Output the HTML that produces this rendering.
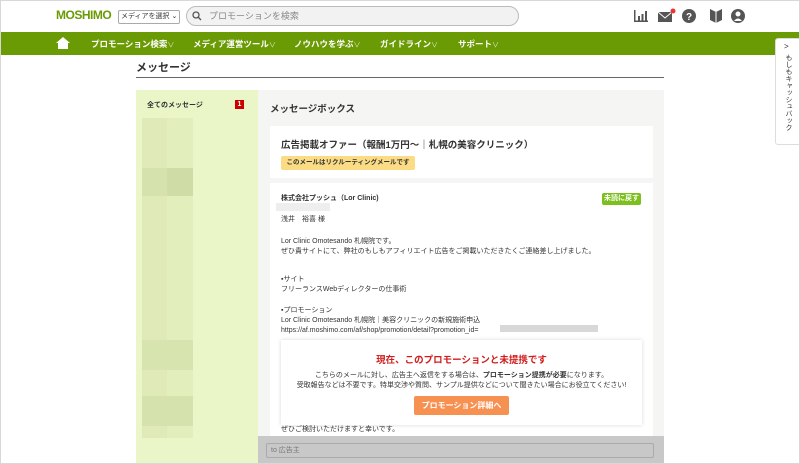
<!DOCTYPE html>
<html><head><meta charset="utf-8"><style>
*{margin:0;padding:0;box-sizing:border-box}
body{width:800px;height:464px;overflow:hidden;background:#fff;font-family:"Liberation Sans","Noto Sans CJK JP",sans-serif;color:#333;position:relative}
.abs{position:absolute;white-space:nowrap}
.logo{left:56px;top:8px;font-weight:bold;color:#6a9a04;font-size:12px;letter-spacing:-0.5px}
.sel{left:118px;top:10px;width:62px;height:14px;border:1px solid #aaa;font-size:7px;line-height:12px;padding-left:2px;border-radius:2px}
.search{left:186px;top:6px;width:333px;height:20px;border:1px solid #bbb;border-radius:10px;background:#f2f2f2;font-size:9px;color:#888;line-height:18px;padding-left:22px}
.nav{left:0;top:32px;width:800px;height:23px;background:#6a9a04;color:#fff;font-size:8.5px;font-weight:bold}
.nav span{position:absolute;top:6px}
.nav i{font-style:normal;font-weight:normal;font-size:7px;color:#dfe9c8}
.ttl{left:136px;top:59px;font-size:11px;font-weight:bold}
.line{left:136px;top:77px;width:528px;height:1px;background:#666}
.side{left:136px;top:90px;width:122px;height:374px;background:#eaf5c8}
.main{left:258px;top:90px;width:406px;height:374px;background:#f5f5f3}
.card{background:#fff}
.t{font-size:7px;line-height:10px}
</style></head><body>
<div class="abs logo">MOSHIMO</div>
<div class="abs sel">メディアを選択 ⌄</div>
<div class="abs search">プロモーションを検索</div>
<svg class="abs" style="left:192px;top:11px" width="10" height="10"><circle cx="4" cy="4" r="3" fill="none" stroke="#555" stroke-width="1.3"/><line x1="6" y1="6" x2="9" y2="9" stroke="#555" stroke-width="1.3"/></svg>
<svg class="abs" style="left:630px;top:6px" width="120" height="20">
<g fill="#555"><rect x="4" y="4" width="1.5" height="12"/><rect x="4" y="14.5" width="14" height="1.5"/><rect x="8" y="10" width="2" height="5"/><rect x="11.5" y="8" width="2" height="7"/><rect x="15" y="5" width="2" height="10"/>
<rect x="28" y="6" width="14" height="10"/><path d="M28 6 L35 12 L42 6" stroke="#fff" fill="none"/><circle cx="43" cy="5" r="2.5" fill="#e33"/>
<circle cx="59" cy="10" r="7"/><circle cx="108" cy="10" r="7"/>
<path d="M80 3 L86 6 L92 3 L92 14 L86 17 L80 14Z"/></g>
<text x="59" y="14" font-size="10" font-weight="bold" fill="#fff" text-anchor="middle">?</text>
<circle cx="108" cy="8" r="2.5" fill="#fff"/><path d="M104 15 Q108 10 112 15Z" fill="#fff"/><path d="M86 6 L86 17" stroke="#fff"/>
</svg>
<div class="abs nav">
<svg class="abs" style="left:56px;top:4px" width="14" height="14"><path d="M7 1 L14 7 L12 7 L12 13 L2 13 L2 7 L0 7Z" fill="#fff"/></svg>
<span style="left:91px">プロモーション検索<i>∨</i></span>
<span style="left:193px">メディア運営ツール<i>∨</i></span>
<span style="left:294px">ノウハウを学ぶ<i>∨</i></span>
<span style="left:380px">ガイドライン<i>∨</i></span>
<span style="left:458px">サポート<i>∨</i></span>
</div>
<div class="abs" style="left:775px;top:38px;width:26px;height:107px;background:#fff;border:1px solid #ddd;border-radius:3px"></div>
<div class="abs" style="left:784px;top:42px;font-size:8px">&gt;</div>
<div class="abs" style="left:783px;top:54px;font-size:7px;writing-mode:vertical-rl;line-height:10px">もしもキャッシュバック</div>
<div class="abs ttl">メッセージ</div>
<div class="abs line"></div>
<div class="abs side"></div>
<div class="abs" style="left:142px;top:118px;width:25px;height:320px;background:#dfeab8"></div>
<div class="abs" style="left:167px;top:118px;width:26px;height:320px;background:#e2eebc"></div>
<div class="abs" style="left:142px;top:168px;width:51px;height:28px;background:#d6e2ad"></div>
<div class="abs" style="left:167px;top:168px;width:26px;height:28px;background:#cfdca5"></div>
<div class="abs" style="left:142px;top:340px;width:51px;height:30px;background:#d8e4b0"></div>
<div class="abs" style="left:142px;top:396px;width:51px;height:30px;background:#d6e2ad"></div>
<div class="abs t" style="left:147px;top:101px;font-weight:bold">全てのメッセージ</div>
<div class="abs" style="left:235px;top:100px;width:9px;height:9px;background:#c00;color:#fff;font-size:7px;text-align:center;line-height:9px;font-weight:bold">1</div>
<div class="abs main"></div>
<div class="abs" style="left:270px;top:101px;font-size:9.5px;font-weight:bold">メッセージボックス</div>
<div class="abs card" style="left:270px;top:126px;width:383px;height:52px"></div>
<div class="abs" style="left:281px;top:137px;font-size:9.5px;font-weight:bold">広告掲載オファー（報酬1万円〜｜札幌の美容クリニック）</div>
<div class="abs" style="left:281px;top:156px;width:134px;height:14px;background:#fbdc84;border-radius:2px;font-size:6.5px;font-weight:bold;line-height:14px;text-align:center">このメールはリクルーティングメールです</div>
<div class="abs card" style="left:270px;top:183px;width:383px;height:253px"></div>
<div class="abs t" style="left:281px;top:194px;font-weight:bold">株式会社プッシュ（Lor Clinic)</div>
<div class="abs" style="left:276px;top:203px;width:54px;height:8px;background:#eee"></div>
<div class="abs" style="left:602px;top:193px;width:39px;height:12px;background:#7cbf1e;border-radius:2px;color:#fff;font-size:7px;font-weight:bold;text-align:center;line-height:12px">未読に戻す</div>
<div class="abs t" style="left:281px;top:215px">浅井　裕喜 様</div>
<div class="abs t" style="left:281px;top:237px">Lor Clinic Omotesando 札幌院です。<br>ぜひ貴サイトにて、弊社のもしもアフィリエイト広告をご掲載いただきたくご連絡差し上げました。</div>
<div class="abs t" style="left:281px;top:275px">▪サイト<br>フリーランスWebディレクターの仕事術</div>
<div class="abs t" style="left:281px;top:306px">▪プロモーション<br>Lor Clinic Omotesando 札幌院｜美容クリニックの新規施術申込<br>https://af.moshimo.com/af/shop/promotion/detail?promotion_id=</div>
<div class="abs" style="left:500px;top:325px;width:98px;height:7px;background:#d8d8d8"></div>
<div class="abs" style="left:281px;top:340px;width:361px;height:85px;background:#fff;box-shadow:0 0 4px rgba(0,0,0,.15)"></div>
<div class="abs" style="left:281px;top:352px;width:361px;text-align:center;color:#d21d1d;font-size:9.5px;font-weight:bold">現在、このプロモーションと未提携です</div>
<div class="abs t" style="left:281px;top:371px;width:361px;text-align:center">こちらのメールに対し、広告主へ返信をする場合は、<b>プロモーション提携が必要</b>になります。<br>受取報告などは不要です。特単交渉や質問、サンプル提供などについて聞きたい場合にお役立てください!</div>
<div class="abs" style="left:414px;top:396px;width:95px;height:19px;background:#f79152;border-radius:2px;color:#fff;font-size:8px;font-weight:bold;text-align:center;line-height:19px">プロモーション詳細へ</div>
<div class="abs t" style="left:281px;top:425px">ぜひご検討いただけますと幸いです。</div>
<div class="abs" style="left:258px;top:436px;width:406px;height:28px;background:#c8c8c8"></div>
<div class="abs" style="left:266px;top:443px;width:388px;height:15px;background:#c8c8c8;border:1px solid #aaa;border-radius:2px;font-size:7px;color:#777;line-height:13px;padding-left:4px">to 広告主</div>
<div class="abs" style="left:0;top:0;width:800px;height:464px;border:1px solid #d8d8d8;pointer-events:none"></div>
</body></html>
